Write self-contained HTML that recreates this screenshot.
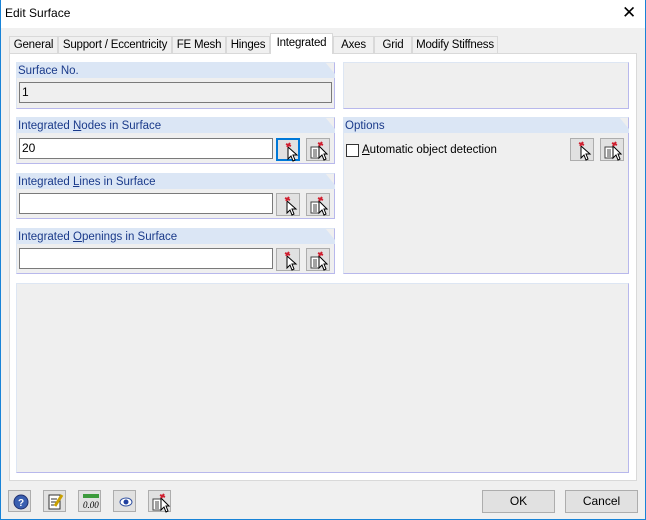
<!DOCTYPE html>
<html><head><style>
*{box-sizing:border-box;margin:0;padding:0}
body{width:646px;height:520px;background:#f0f0f0;font-family:"Liberation Sans",sans-serif;font-size:12px;color:#000;position:relative;overflow:hidden;white-space:nowrap}
.win{position:absolute;left:0;top:0;width:646px;height:520px;border:1px solid #1883d7;border-top:none;}
.title{position:absolute;left:0;top:0;width:646px;height:28px;background:#fff;}
.title span{position:absolute;left:5px;top:6px;font-size:12px}
.title .x{position:absolute;left:622px;top:3px;font-size:17px;}
.abs{position:absolute}
.tab{position:absolute;top:36px;height:18px;border:1px solid #d9d9d9;border-bottom:none;background:#f0f0f0;font-size:11.5px;text-align:center;line-height:17px;letter-spacing:-0.2px}
.tab.sel{top:33px;height:21px;background:#fff;border-color:#d9d9d9;z-index:2;line-height:18px}
.panel{position:absolute;left:9px;top:53px;width:628px;height:428px;background:#fff;border:1px solid #d9d9d9}
.grp{position:absolute;background:#efefef;border:1px solid #dde6f3;border-right-color:#b8b8ec;border-bottom-color:#b8b8ec}
.hdr{position:absolute;left:-1px;top:-1px;right:-1px;height:16px;background:#dbe6f5;color:#1a3a8a;font-size:11.5px;padding-left:2px;padding-top:2px;line-height:14px;clip-path:polygon(0 0,calc(100% - 10px) 0,100% 12px,100% 100%,0 100%)}
.inp{position:absolute;height:21px;background:#fff;border:1px solid #7a7a7a;padding-left:2px;line-height:19px;font-size:12px}
.btn{position:absolute;width:24px;height:23px;background:#e1e1e1;border:1px solid #adadad}
.btn svg{position:absolute;left:3px;top:2px}
.big{position:absolute;height:23px;width:73px;background:#e1e1e1;border:1px solid #adadad;text-align:center;line-height:21px}
u{text-decoration:underline}
</style></head><body>
<div class="title"><span>Edit Surface</span><span class="x">✕</span></div>
<div class="win"></div>
<div class="tab" style="left:9px;width:49px">General</div>
<div class="tab" style="left:58px;width:114px">Support / Eccentricity</div>
<div class="tab" style="left:172px;width:54px">FE Mesh</div>
<div class="tab" style="left:226px;width:44px">Hinges</div>
<div class="tab sel" style="left:270px;width:63px">Integrated</div>
<div class="tab" style="left:333px;width:41px">Axes</div>
<div class="tab" style="left:374px;width:38px">Grid</div>
<div class="tab" style="left:412px;width:86px">Modify Stiffness</div>
<div class="panel"></div>

<svg width="0" height="0" style="position:absolute"><defs>
<g id="pick"><path d="M7 5 L7 17 L10 14 L12 19 L14 18 L12 13 L16 13 Z" fill="#fff" stroke="#000" stroke-width="1"/><path d="M5 2 L10 4 M9 1 L6 5" stroke="#d02030" stroke-width="2"/></g>
<g id="list"><rect x="1" y="6" width="8" height="11" fill="#fff" stroke="#444"/><path d="M3 9h4M3 11h4M3 13h4M3 15h4" stroke="#444"/><path d="M9 5 L9 17 L12 14 L14 19 L16 18 L14 13 L17 13 Z" fill="#fff" stroke="#000"/><path d="M8 2 L13 4 M12 1 L9 5" stroke="#d02030" stroke-width="2"/></g>
</defs></svg>

<div class="grp" style="left:16px;top:62px;width:319px;height:47px"><div class="hdr">Surface No.</div>
<div class="inp" style="left:2px;top:19px;width:313px;background:#efefef">1</div></div>

<div class="grp" style="left:16px;top:117px;width:319px;height:47px"><div class="hdr">Integrated <u>N</u>odes in Surface</div>
<div class="inp" style="left:2px;top:20px;width:254px">20</div>
<div class="btn" style="left:259px;top:20px;border:2px solid #0078d7"><svg width="20" height="20"><use href="#pick"/></svg></div>
<div class="btn" style="left:289px;top:20px"><svg width="20" height="20"><use href="#list"/></svg></div></div>

<div class="grp" style="left:16px;top:173px;width:319px;height:46px"><div class="hdr">Integrated <u>L</u>ines in Surface</div>
<div class="inp" style="left:2px;top:19px;width:254px"></div>
<div class="btn" style="left:259px;top:19px"><svg width="20" height="20"><use href="#pick"/></svg></div>
<div class="btn" style="left:289px;top:19px"><svg width="20" height="20"><use href="#list"/></svg></div></div>

<div class="grp" style="left:16px;top:228px;width:319px;height:46px"><div class="hdr">Integrated <u>O</u>penings in Surface</div>
<div class="inp" style="left:2px;top:19px;width:254px"></div>
<div class="btn" style="left:259px;top:19px"><svg width="20" height="20"><use href="#pick"/></svg></div>
<div class="btn" style="left:289px;top:19px"><svg width="20" height="20"><use href="#list"/></svg></div></div>

<div class="grp" style="left:343px;top:62px;width:286px;height:47px"></div>
<div class="grp" style="left:343px;top:117px;width:286px;height:157px"><div class="hdr">Options</div>
<div class="abs" style="left:2px;top:26px;width:13px;height:13px;border:1px solid #333;background:#fff"></div>
<div class="abs" style="left:18px;top:26px;font-size:11.5px"><u>A</u>utomatic object detection</div>
<div class="btn" style="left:226px;top:20px"><svg width="20" height="20"><use href="#pick"/></svg></div>
<div class="btn" style="left:256px;top:20px"><svg width="20" height="20"><use href="#list"/></svg></div></div>

<div class="grp" style="left:16px;top:283px;width:613px;height:190px"></div>

<div class="btn" style="left:8px;top:490px;width:23px;height:22px"><svg width="18" height="18"><circle cx="9" cy="9" r="7" fill="#3a5fb0" stroke="#203070"/><text x="6" y="13" fill="#fff" font-size="10" font-weight="bold" font-family="Liberation Sans">?</text></svg></div>
<div class="btn" style="left:43px;top:490px;width:23px;height:22px"><svg width="18" height="18"><rect x="2" y="2" width="11" height="14" fill="#fff" stroke="#333"/><path d="M4 6h6M4 9h6M4 12h5" stroke="#333"/><path d="M15 2 L8 13" stroke="#c9a000" stroke-width="3"/></svg></div>
<div class="btn" style="left:78px;top:490px;width:23px;height:22px"><svg width="18" height="18"><rect x="1" y="1" width="16" height="4" fill="#3c9a3c"/><text x="1" y="15" font-size="9" font-style="italic" font-family="Liberation Serif">0.00</text></svg></div>
<div class="btn" style="left:113px;top:490px;width:23px;height:22px"><svg width="18" height="18"><ellipse cx="9" cy="9" rx="6" ry="4" fill="#fff" stroke="#3050a0"/><circle cx="9" cy="9" r="2.5" fill="#2040a0"/></svg></div>
<div class="btn" style="left:148px;top:490px;width:23px;height:22px"><svg width="20" height="20"><use href="#list"/></svg></div>
<div class="big" style="left:482px;top:490px">OK</div>
<div class="big" style="left:565px;top:490px">Cancel</div>
</body></html>
